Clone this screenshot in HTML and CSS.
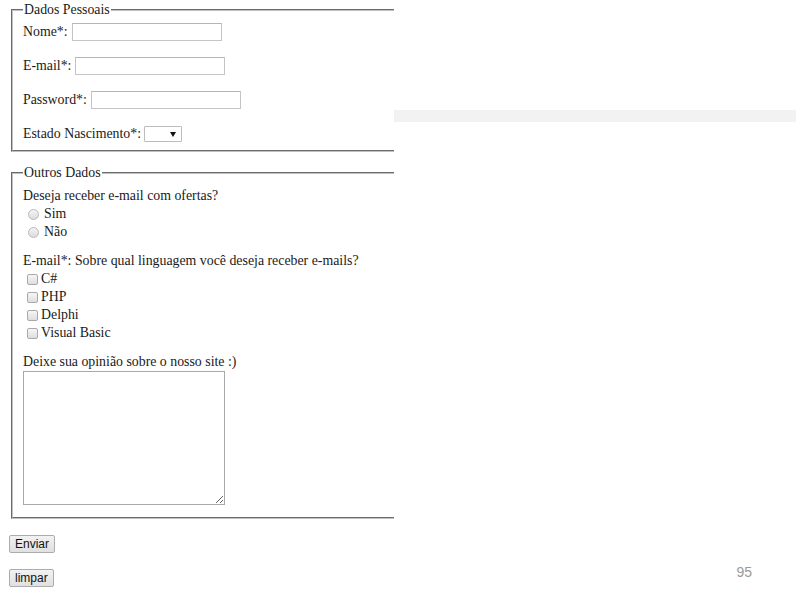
FILE: index.html
```html
<!DOCTYPE html>
<html lang="pt">
<head>
<meta charset="utf-8">
<title>Formulário</title>
<link rel="stylesheet" href="styles.css">
</head>
<body>
<div class="page">
  <div class="slide">
    <form class="form">
      <fieldset class="box box-personal">
        <legend class="legend">Dados Pessoais</legend>
        <div class="row"><label class="lbl">Nome*:</label><input type="text" class="field"></div>
        <div class="row"><label class="lbl">E-mail*:</label><input type="text" class="field"></div>
        <div class="row"><label class="lbl">Password*:</label><input type="password" class="field"></div>
        <div class="row"><label class="lbl">Estado Nascimento*:</label><span class="select-wrap"><select class="select"></select></span></div>
      </fieldset>
      <fieldset class="box box-other">
        <legend class="legend">Outros Dados</legend>
        <div class="group">
          <div class="line">Deseja receber e-mail com ofertas?</div>
          <label class="line opt-radio"><input type="radio" class="radio" name="ofertas"><span>Sim</span></label>
          <label class="line opt-radio"><input type="radio" class="radio" name="ofertas"><span>Não</span></label>
        </div>
        <div class="group">
          <div class="line">E-mail*: Sobre qual linguagem você deseja receber e-mails?</div>
          <label class="line opt-check"><input type="checkbox" class="check"><span>C#</span></label>
          <label class="line opt-check"><input type="checkbox" class="check"><span>PHP</span></label>
          <label class="line opt-check"><input type="checkbox" class="check"><span>Delphi</span></label>
          <label class="line opt-check"><input type="checkbox" class="check"><span>Visual Basic</span></label>
        </div>
        <div class="group">
          <div class="line">Deixe sua opinião sobre o nosso site :)</div>
          <textarea class="comments"></textarea>
        </div>
      </fieldset>
      <div class="actions">
        <button type="submit" class="btn">Enviar</button>
        <button type="reset" class="btn">limpar</button>
      </div>
    </form>
  </div>
  <aside class="side">
    <div class="bar"></div>
    <div class="pagenum">95</div>
  </aside>
</div>
</body>
</html>
```
FILE: styles.css
```css
html, body {
  margin: 0;
  padding: 0;
  background: #fff;
}
.page {
  display: flex;
  width: 796px;
  height: 595px;
  overflow: hidden;
  font-family: "Liberation Serif", "Times New Roman", serif;
  font-size: 13.85px;
  color: #1a1a1a;
}
.slide {
  width: 394px;
  flex: none;
  overflow: hidden;
  padding: 2px 0 0 9px;
  box-sizing: border-box;
}
.form {
  margin: 0;
}
.box {
  width: 520px;
  margin: 0 0 0 2px;
  border: 2px groove #c0c0c0;
  box-sizing: border-box;
  padding: 5px 10px 7px 10px;
  min-width: 0;
}
.legend {
  padding: 0 1px;
  line-height: 16px;
  font-size: 13.85px;
}
.row {
  display: flex;
  align-items: center;
  height: 18px;
  margin-bottom: 16px;
}
.row:last-of-type {
  margin-bottom: 0;
}
.lbl {
  white-space: nowrap;
}
.field {
  margin: 0 0 0 4px;
  width: 150px;
  height: 18px;
  box-sizing: border-box;
  border: 1px solid #c4c4c4;
  border-top-color: #b5b5b5;
  padding: 0 2px;
  font: inherit;
  background: #fff;
}
.select-wrap {
  position: relative;
  display: inline-block;
  margin-left: 3px;
  height: 16px;
}
.select {
  appearance: none;
  -webkit-appearance: none;
  display: block;
  width: 38px;
  height: 16px;
  box-sizing: border-box;
  border: 1px solid #bcbcbc;
  border-radius: 1px;
  background: #fff;
  margin: 0;
  padding: 0;
}
.select-wrap::after {
  content: "";
  position: absolute;
  right: 6px;
  top: 6px;
  width: 0;
  height: 0;
  border-left: 3px solid transparent;
  border-right: 3px solid transparent;
  border-top: 5px solid #111;
}
.box-other {
  margin-top: 13px;
  padding-top: 6px;
  padding-bottom: 12px;
}
.group + .group {
  margin-top: 11px;
}
.line {
  display: flex;
  align-items: center;
  height: 18px;
  white-space: nowrap;
}
.opt-radio .radio {
  appearance: none;
  -webkit-appearance: none;
  width: 11px;
  height: 11px;
  margin: 0 5px 0 5px;
  border: 1px solid #b9b9b9;
  border-radius: 50%;
  background: linear-gradient(#f4f4f4, #dcdcdc);
  box-sizing: border-box;
  flex: none;
}
.opt-check .check {
  appearance: none;
  -webkit-appearance: none;
  width: 11px;
  height: 11px;
  margin: 0 3px 0 4px;
  border: 1px solid #a9a9a9;
  border-radius: 2px;
  background: linear-gradient(#f6f6f6, #dedede);
  box-sizing: border-box;
  flex: none;
}
.comments {
  display: block;
  width: 202px;
  height: 134px;
  box-sizing: border-box;
  margin: 0;
  border: 1px solid #a9a9a9;
  padding: 2px;
  font: inherit;
}
.actions {
  display: flex;
  flex-direction: column;
  align-items: flex-start;
  gap: 16px;
  margin-top: 16px;
}
.btn {
  display: block;
  margin: 0;
  height: 18px;
  padding: 0 5px;
  box-sizing: border-box;
  font-family: "Liberation Sans", Arial, sans-serif;
  font-size: 12px;
  line-height: 16px;
  color: #111;
  border: 1px solid #acacac;
  border-radius: 2px;
  background: linear-gradient(#f2f2f2, #e0e0e0);
}
.side {
  flex: 1;
  display: flex;
  flex-direction: column;
}
.bar {
  margin-top: 110px;
  height: 12px;
  background: #f2f2f2;
}
.pagenum {
  margin-top: auto;
  margin-bottom: 15px;
  padding-right: 44px;
  text-align: right;
  font-family: "Liberation Sans", Arial, sans-serif;
  font-size: 14px;
  line-height: 16px;
  color: #9a9a9a;
}
```
